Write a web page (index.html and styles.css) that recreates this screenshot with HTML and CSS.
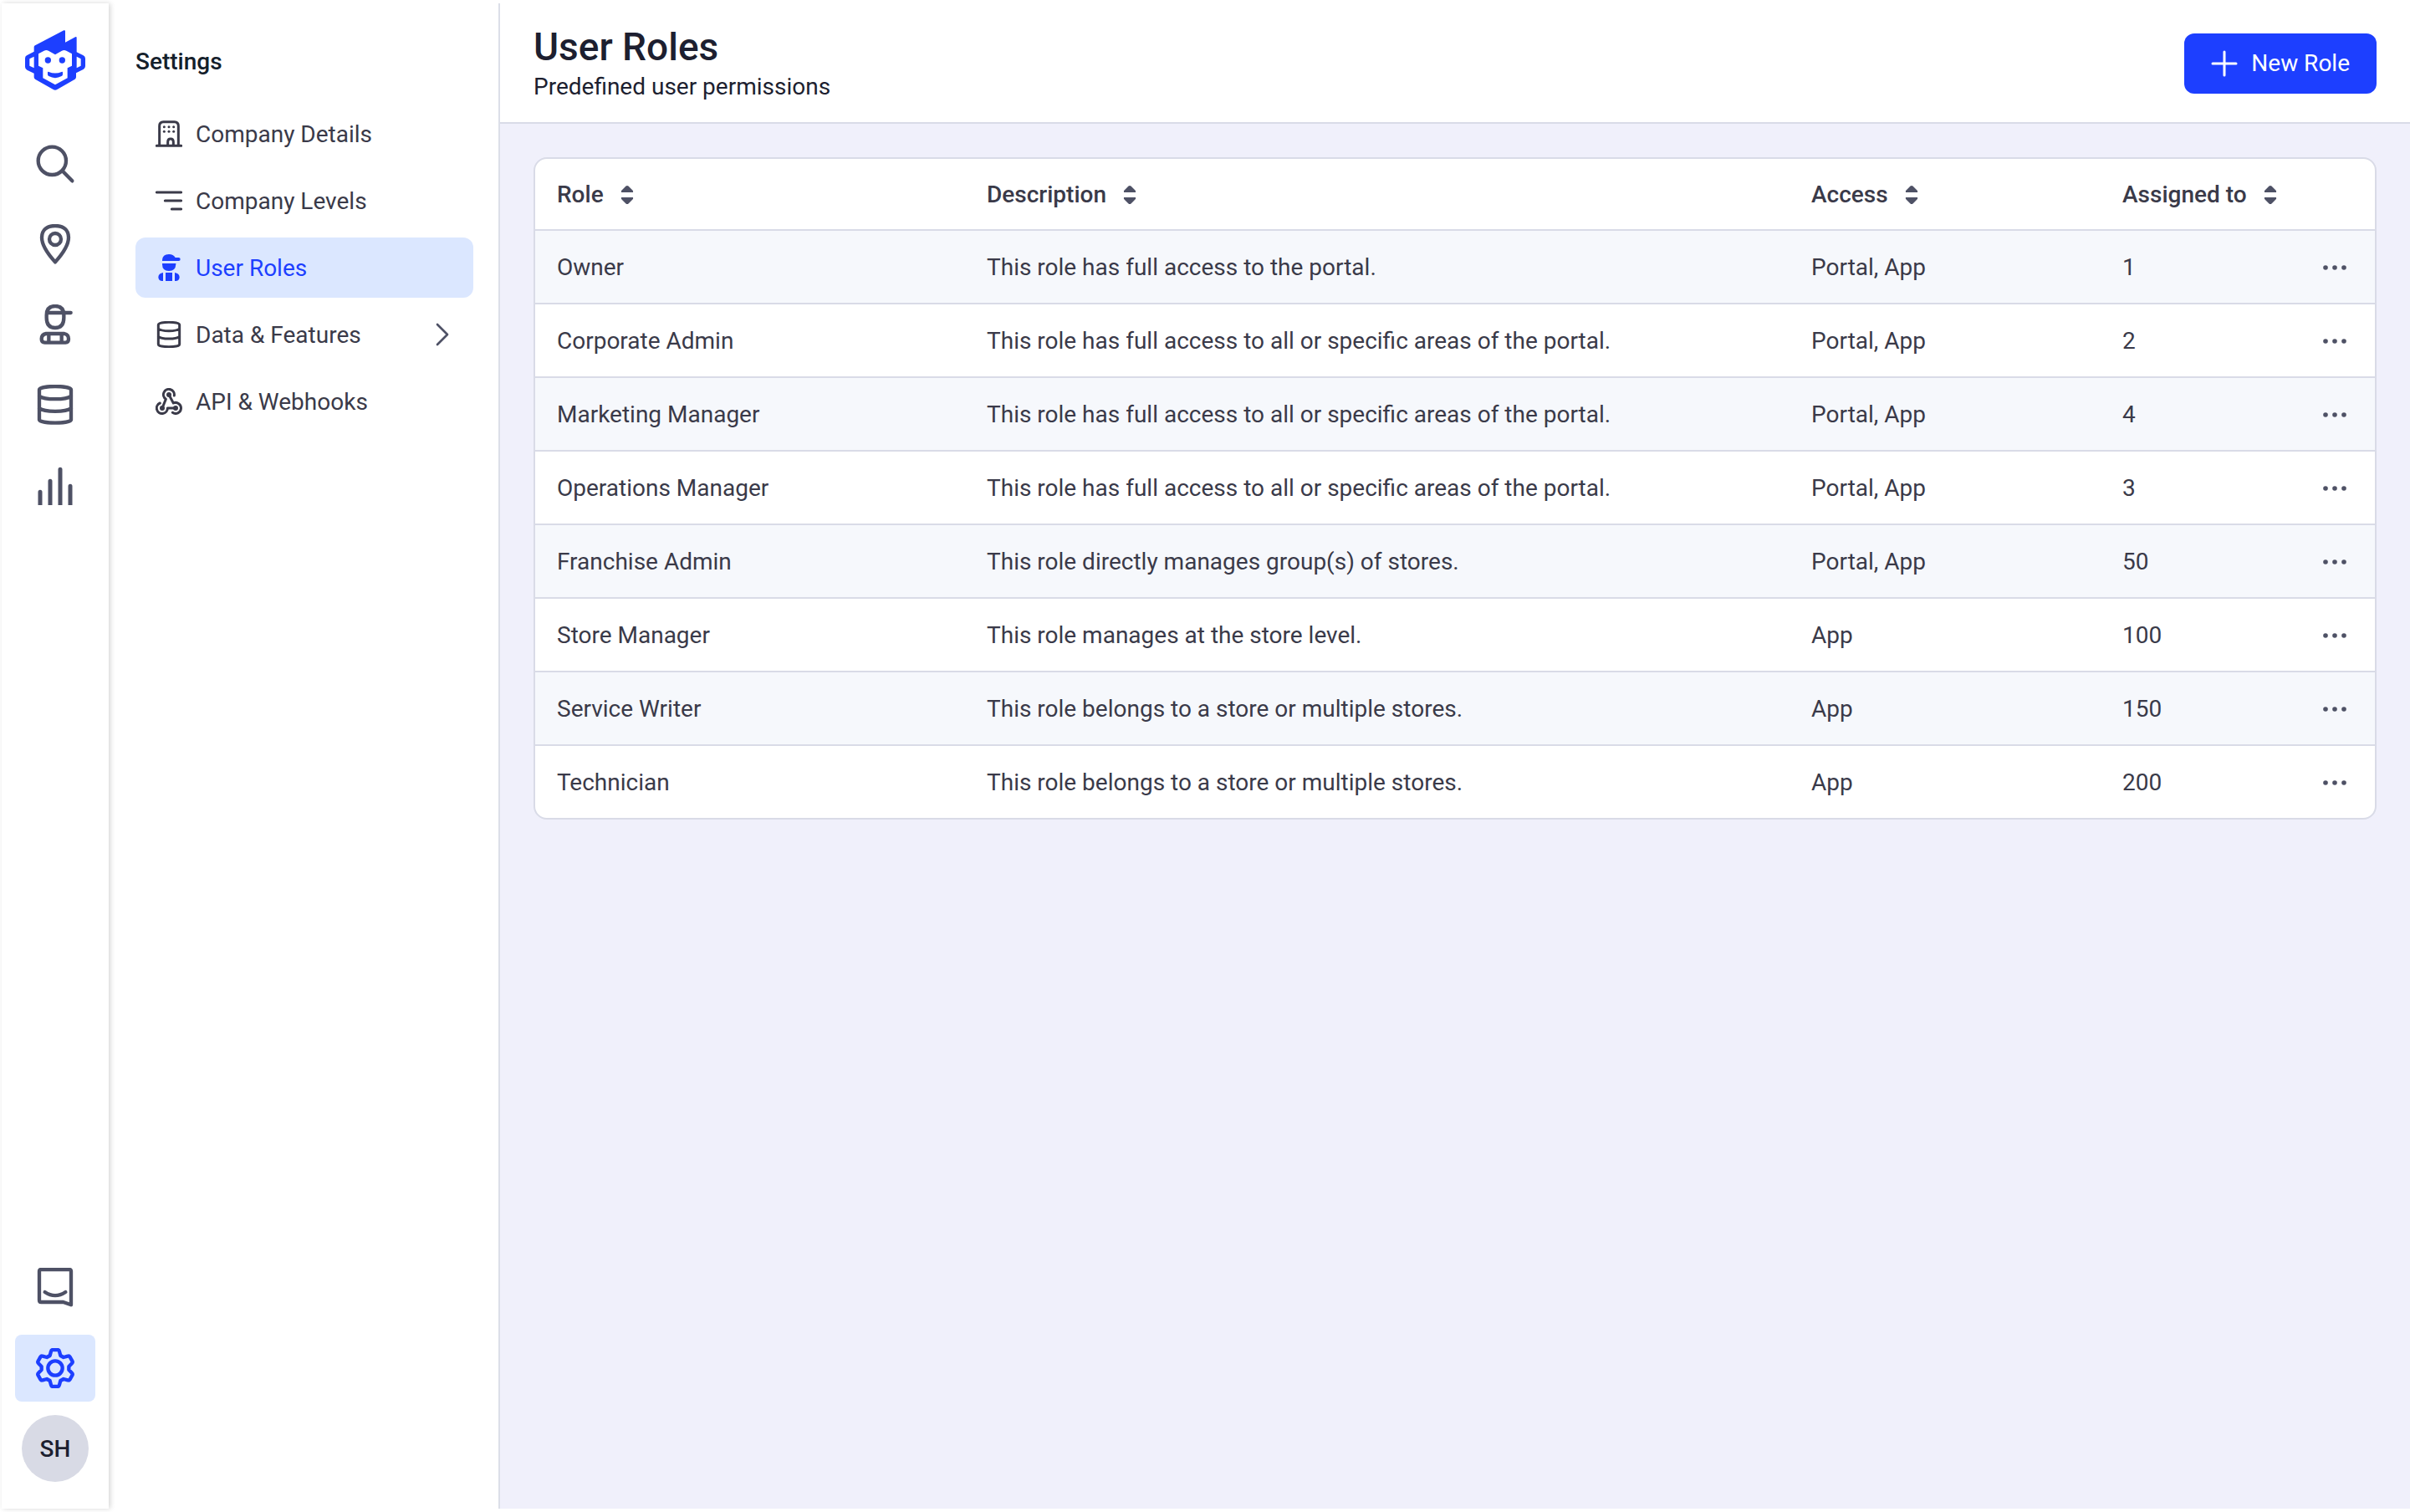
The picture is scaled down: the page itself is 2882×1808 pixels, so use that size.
FILE: index.html
```html
<!DOCTYPE html>
<html lang="en">
<head>
    <meta charset="UTF-8">
    <meta name="viewport" content="width=device-width, initial-scale=1.0">
    <title>User Roles</title>
    <link rel="stylesheet" href="styles.css">
</head>
<body>
    <!-- Shared icons -->
    <svg class="sprite" aria-hidden="true">
        <symbol id="icon-sort" viewBox="0 0 24 24">
            <path d="M5 8.5Q4.500 7.500 5.500 6.500L10.500 1.600Q12 0.400 13.500 1.600L18.500 6.500Q19.500 7.500 19 9H5zM5 15H19Q19.500 16.500 18.500 17.500L13.500 22.400Q12 23.600 10.500 22.400L5.500 17.500Q4.500 16.500 5 15z"/>
        </symbol>
        <symbol id="icon-dots" viewBox="0 0 48 48">
            <circle cx="13" cy="24" r="2.800"/>
            <circle cx="24" cy="24" r="2.800"/>
            <circle cx="35" cy="24" r="2.800"/>
        </symbol>
    </svg>

    <div class="app">
        <!-- Icon rail -->
        <nav class="rail" aria-label="Main">
            <a class="logo" href="#" aria-label="Home">
                <svg viewBox="90 108 216 216">
                    <path fill-rule="evenodd" d="M122 169Q122 165 126 163L229 109Q234 107 234 112V152L270 133Q275 130 275 136V187L299 199Q306 203 306 210V237Q306 244 300 248L273 262V277Q273 281 269 284L205 321Q198 325 191 321L126 284Q122 281 122 277V263L97 251Q90 247 90 240V209Q90 202 96 199L122 185zM138 193V236L154 244V280L198 304L242 280V244L258 236V193L238 182Q230 178 222 182L198 196L174 182Q166 178 158 182zM122 203L106 211V236L122 244zM275 203V244L290 236V211z"/>
                    <circle cx="172" cy="216" r="11"/>
                    <circle cx="223" cy="216" r="11"/>
                    <path d="M171 260Q171 256 175 258Q198 267 221 258Q225 256 225 260V267Q225 271 221 273Q198 286 175 273Q171 271 171 267z"/>
                </svg>
            </a>
            <a class="rail-link" href="#" aria-label="Search">
                <svg class="line" viewBox="126 516 144 144">
                    <circle cx="187" cy="577" r="50"/>
                    <path d="M225 614L259 649"/>
                </svg>
            </a>
            <a class="rail-link" href="#" aria-label="Locations">
                <svg class="line" viewBox="126 804 144 144">
                    <path d="M198 810C168 810 150 825 150 852C150 882 178 918 198 940C218 918 246 882 246 852C246 825 228 810 198 810z"/>
                    <circle cx="198" cy="858" r="21"/>
                </svg>
            </a>
            <a class="rail-link" href="#" aria-label="Users">
                <svg class="line" viewBox="126 132 144 144">
                    <path d="M167 170C167 149 178 138 198 138C218 138 229 149 229 170V180C229 204 218 216 198 216C178 216 167 204 167 180zM168 162H254"/>
                    <path d="M165 237H231Q246 240 246 256Q246 269 235 269H161Q149 269 149 256Q149 240 165 237zM175 238V268M221 238V268"/>
                </svg>
            </a>
            <a class="rail-link" href="#" aria-label="Data">
                <svg class="line" viewBox="126 420 144 144">
                    <path d="M141 438C141 430 170 426 198 426C226 426 255 430 255 438V546C255 553 226 557 198 557C170 557 141 553 141 546zM141 461C160 475 236 475 255 461M141 505C160 519 236 519 255 505"/>
                </svg>
            </a>
            <a class="rail-link" href="#" aria-label="Reports">
                <svg class="line thick" viewBox="126 708 144 144">
                    <path d="M144 805V870M180 766V870M216 724V870M252 784V870"/>
                </svg>
            </a>
            <div class="rail-bottom">
                <a class="rail-link" href="#" aria-label="Messages">
                    <svg class="line" viewBox="126 78 144 144">
                        <path d="M148 84H248Q255 84 255 91V211L227 201H148Q141 201 141 194V91Q141 84 148 84z"/>
                        <path d="M161 165Q198 190 235 165"/>
                    </svg>
                </a>
                <a class="rail-link active" href="#" aria-label="Settings">
                    <svg class="line" viewBox="-72 -72 144 144">
                        <path d="M-19-45L-15-60Q-14-66-8-66H8Q14-66 15-60L19-45L30-39L45-43Q50-45 53-40L61-26Q64-21 60-17L49-6V6L60 17Q64 21 61 26L53 40Q50 45 45 43L30 39L19 45L15 60Q14 66 8 66H-8Q-14 66-15 60L-19 45L-30 39L-45 43Q-50 45-53 40L-61 26Q-64 21-60 17L-49 6V-6L-60-17Q-64-21-61-26L-53-40Q-50-45-45-43L-30-39z"/>
                        <circle cx="0" cy="0" r="26"/>
                    </svg>
                </a>
                <button class="avatar" type="button">SH</button>
            </div>
        </nav>

        <!-- Settings menu -->
        <aside class="menu">
            <h2>Settings</h2>
            <nav class="menu-list" aria-label="Settings">
                <a class="menu-link" href="#">
                    <svg class="line" viewBox="168 342 96 96">
                        <path d="M182 433V362Q182 347 196 347H236Q250 347 250 362V433M172 433H260M212 432V419Q212 408 222 408Q232 408 232 419V432"/>
                        <g class="solid">
                            <circle cx="199" cy="365" r="4.500"/>
                            <circle cx="216" cy="365" r="4.500"/>
                            <circle cx="233" cy="365" r="4.500"/>
                            <circle cx="199" cy="382" r="4.500"/>
                            <circle cx="216" cy="382" r="4.500"/>
                            <circle cx="233" cy="382" r="4.500"/>
                        </g>
                    </svg>
                    <span>Company Details</span>
                </a>
                <a class="menu-link" href="#">
                    <svg class="line" viewBox="168 582 96 96">
                        <path d="M172 600H260M202 630H260M226 660H260"/>
                    </svg>
                    <span>Company Levels</span>
                </a>
                <a class="menu-link active" href="#" aria-current="page">
                    <svg viewBox="168 132 96 96">
                        <path d="M192 156V153Q193 132 216 132Q232 132 239 144H251Q257 144 257 150Q257 156 251 156z"/>
                        <path d="M192 165H241V168Q240 192 216 192Q192 192 192 168z"/>
                        <path d="M195 198V228H190Q178 226 178 214Q179 201 195 198zM204 198H228V228H204zM237 198Q253 201 254 214Q254 226 242 228H237z"/>
                    </svg>
                    <span>User Roles</span>
                </a>
                <a class="menu-link" href="#">
                    <svg class="line" viewBox="168 372 96 96">
                        <path d="M178 385C178 379 196 376 216 376C236 376 254 379 254 385V455C254 461 236 464 216 464C196 464 178 461 178 455zM178 399C190 410 242 410 254 399M178 427C190 438 242 438 254 427"/>
                    </svg>
                    <span>Data &amp; Features</span>
                    <svg class="line chevron" viewBox="0 0 96 96">
                        <path d="M33 12L69 48L33 84"/>
                    </svg>
                </a>
                <a class="menu-link" href="#">
                    <svg class="line" viewBox="168 612 96 96">
                        <path d="M235 639A19.500 19.500 0 1 0 205 652L192 684M216 636L232 666A19.500 19.500 0 1 1 229 700M240 684H211A19.500 19.500 0 1 1 184 666"/>
                        <g class="solid">
                            <circle cx="216" cy="636" r="9"/>
                            <circle cx="192" cy="684" r="9"/>
                            <circle cx="240" cy="684" r="9"/>
                        </g>
                    </svg>
                    <span>API &amp; Webhooks</span>
                </a>
            </nav>
        </aside>

        <!-- Page content -->
        <main class="content">
            <header class="page-header">
                <div>
                    <h1>User Roles</h1>
                    <p>Predefined user permissions</p>
                </div>
                <button class="new-btn" type="button">
                    <svg viewBox="0 0 32 32"><path d="M16 2V30M2 16H30"/></svg>
                    New Role
                </button>
            </header>

            <div class="card">
                <table class="roles">
                    <colgroup>
                        <col class="col-role">
                        <col>
                        <col class="col-access">
                        <col class="col-assigned">
                        <col class="col-actions">
                    </colgroup>
                    <thead>
                        <tr>
                            <th><button class="sort-btn" type="button">Role <svg><use href="#icon-sort"/></svg></button></th>
                            <th><button class="sort-btn" type="button">Description <svg><use href="#icon-sort"/></svg></button></th>
                            <th><button class="sort-btn" type="button">Access <svg><use href="#icon-sort"/></svg></button></th>
                            <th><button class="sort-btn" type="button">Assigned to <svg><use href="#icon-sort"/></svg></button></th>
                            <th></th>
                        </tr>
                    </thead>
                    <tbody>
                        <tr>
                            <td>Owner</td>
                            <td>This role has full access to the portal.</td>
                            <td>Portal, App</td>
                            <td>1</td>
                            <td><button class="more-btn" type="button" aria-label="More"><svg><use href="#icon-dots"/></svg></button></td>
                        </tr>
                        <tr>
                            <td>Corporate Admin</td>
                            <td>This role has full access to all or specific areas of the portal.</td>
                            <td>Portal, App</td>
                            <td>2</td>
                            <td><button class="more-btn" type="button" aria-label="More"><svg><use href="#icon-dots"/></svg></button></td>
                        </tr>
                        <tr>
                            <td>Marketing Manager</td>
                            <td>This role has full access to all or specific areas of the portal.</td>
                            <td>Portal, App</td>
                            <td>4</td>
                            <td><button class="more-btn" type="button" aria-label="More"><svg><use href="#icon-dots"/></svg></button></td>
                        </tr>
                        <tr>
                            <td>Operations Manager</td>
                            <td>This role has full access to all or specific areas of the portal.</td>
                            <td>Portal, App</td>
                            <td>3</td>
                            <td><button class="more-btn" type="button" aria-label="More"><svg><use href="#icon-dots"/></svg></button></td>
                        </tr>
                        <tr>
                            <td>Franchise Admin</td>
                            <td>This role directly manages group(s) of stores.</td>
                            <td>Portal, App</td>
                            <td>50</td>
                            <td><button class="more-btn" type="button" aria-label="More"><svg><use href="#icon-dots"/></svg></button></td>
                        </tr>
                        <tr>
                            <td>Store Manager</td>
                            <td>This role manages at the store level.</td>
                            <td>App</td>
                            <td>100</td>
                            <td><button class="more-btn" type="button" aria-label="More"><svg><use href="#icon-dots"/></svg></button></td>
                        </tr>
                        <tr>
                            <td>Service Writer</td>
                            <td>This role belongs to a store or multiple stores.</td>
                            <td>App</td>
                            <td>150</td>
                            <td><button class="more-btn" type="button" aria-label="More"><svg><use href="#icon-dots"/></svg></button></td>
                        </tr>
                        <tr>
                            <td>Technician</td>
                            <td>This role belongs to a store or multiple stores.</td>
                            <td>App</td>
                            <td>200</td>
                            <td><button class="more-btn" type="button" aria-label="More"><svg><use href="#icon-dots"/></svg></button></td>
                        </tr>
                    </tbody>
                </table>
            </div>
        </main>
    </div>
</body>
</html>
```

FILE: styles.css
```css
* {
    box-sizing: border-box;
}

body {
    margin: 0;
    background-color: #fff;
    color: #3a3a49;
    font-family: Roboto, "Liberation Sans", sans-serif;
    font-size: 28px;
    line-height: 40px;
}

h1,
h2,
p {
    margin: 0;
}

a {
    color: inherit;
    text-decoration: none;
}

button {
    border: none;
    padding: 0;
    background: none;
    color: inherit;
    font: inherit;
    cursor: pointer;
}

svg {
    display: block;
    flex-shrink: 0;
    fill: currentColor;
}

.sprite {
    display: none;
}

.app {
    display: flex;
    min-height: calc(100vh - 8px);
    margin: 4px 0 4px 2px;
}

/* outlined icons */
.line {
    fill: none;
    stroke: currentColor;
    stroke-width: 13;
    stroke-linecap: round;
    stroke-linejoin: round;
}

.line .solid {
    fill: currentColor;
    stroke: none;
}

.line.thick {
    stroke-width: 15;
}

/* Icon rail */
.rail {
    display: flex;
    flex-direction: column;
    align-items: center;
    gap: 16px;
    width: 128px;
    flex-shrink: 0;
    padding: 32px 0;
    background-color: #fff;
    box-shadow: 2px 0 6px rgba(0, 0, 0, 0.16);
    color: #4e5165;
    z-index: 1;
}

.logo {
    margin-bottom: 32px;
    color: #1d3fff;
}

.logo svg {
    width: 72px;
    height: 72px;
}

.rail-link {
    display: flex;
    align-items: center;
    justify-content: center;
    width: 96px;
    height: 80px;
    border-radius: 8px;
}

.rail-link svg {
    width: 48px;
    height: 48px;
}

.rail-link.active,
.menu-link.active {
    background-color: #dbe7ff;
    color: #1d3fff;
}

.rail-bottom {
    display: flex;
    flex-direction: column;
    align-items: center;
    gap: 16px;
    margin-top: auto;
}

.avatar {
    width: 80px;
    height: 80px;
    padding-top: 2px;
    border-radius: 50%;
    background-color: #d8dae5;
    color: #1d1f30;
    font-weight: 500;
}

/* Settings menu */
.menu {
    width: 468px;
    flex-shrink: 0;
    padding: 50px 30px 50px 32px;
    border-right: 2px solid #dcdfe8;
}

.menu h2 {
    margin-bottom: 30px;
    color: #14202b;
    font-size: 28px;
    font-weight: 500;
}

.menu-list {
    display: flex;
    flex-direction: column;
    gap: 8px;
}

.menu-link {
    display: flex;
    align-items: center;
    gap: 16px;
    height: 72px;
    padding: 0 22px 0 24px;
    border-radius: 12px;
}

.menu-link span {
    padding-top: 2px;
}

.menu-link svg {
    width: 32px;
    height: 32px;
}

.menu-link .line {
    stroke-width: 9;
}

.menu-link .chevron {
    margin-left: auto;
    color: #4e5165;
    stroke-width: 8;
}

/* Page content */
.content {
    flex: 1;
    min-width: 0;
    background-color: #f0f0fb;
}

.page-header {
    display: flex;
    align-items: center;
    justify-content: space-between;
    height: 144px;
    padding: 2px 40px 0;
    border-bottom: 2px solid #d9dbe7;
    background-color: #fff;
    color: #1d1f30;
}

h1 {
    font-size: 46px;
    font-weight: 500;
    line-height: 56px;
}

.new-btn {
    display: flex;
    align-items: center;
    gap: 16px;
    height: 72px;
    padding: 0 32px;
    border-radius: 12px;
    background-color: #1d3fff;
    color: #fff;
}

.new-btn svg {
    width: 32px;
    height: 32px;
    stroke: currentColor;
    stroke-width: 3;
    stroke-linecap: round;
}

.card {
    margin: 40px;
    border: 2px solid #d9dbe7;
    border-radius: 16px;
    background-color: #fff;
    overflow: hidden;
}

.roles {
    width: 100%;
    border-collapse: separate;
    border-spacing: 0;
    table-layout: fixed;
}

.col-role {
    width: 514px;
}

.col-access {
    width: 372px;
}

.col-assigned {
    width: 230px;
}

.col-actions {
    width: 98px;
}

.roles th,
.roles td {
    height: 88px;
    padding: 2px 0 0 26px;
    border-bottom: 2px solid #d9dbe7;
    text-align: left;
}

.roles th {
    height: 86px;
    font-weight: 500;
}

.roles tbody tr:nth-child(odd) {
    background-color: #f6f8fc;
}

.roles tbody tr:last-child td {
    height: 86px;
    border-bottom: none;
}

.sort-btn {
    display: flex;
    align-items: center;
    gap: 16px;
    white-space: nowrap;
}

.sort-btn svg {
    width: 24px;
    height: 24px;
    color: #4e5165;
}

.more-btn {
    display: block;
    color: #4e5165;
}

.more-btn svg {
    width: 48px;
    height: 48px;
}
```
